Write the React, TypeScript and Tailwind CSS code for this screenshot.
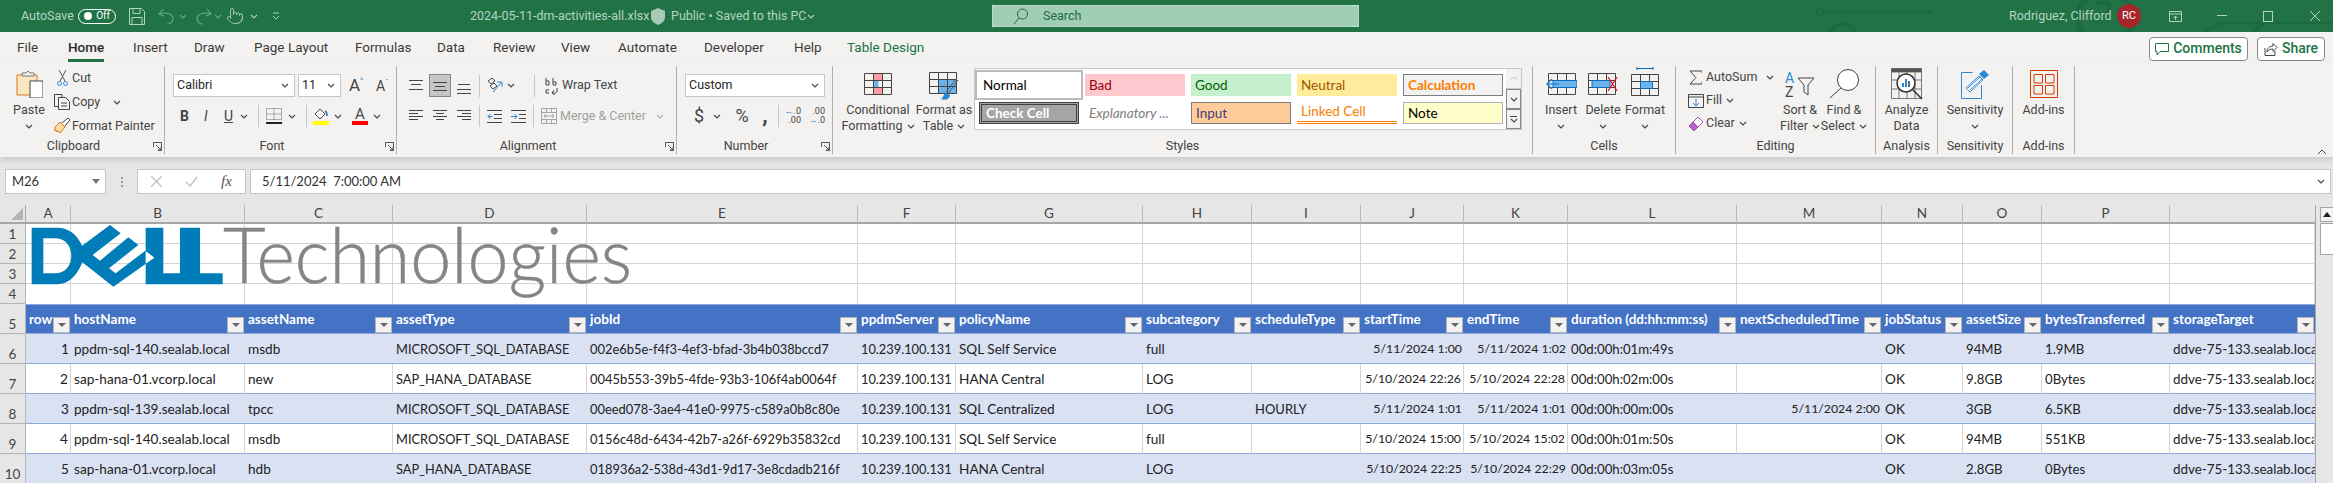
import React from "react";
import { Pointer } from "lucide-react";

type P = { children?: React.ReactNode; w: number; h: number; className?: string };
const S = ({ children, w, h, className }: P) => (
  <svg width={w} height={h} viewBox={`0 0 ${w} ${h}`} fill="none" className={`shrink-0 ${className ?? ""}`}>
    {children}
  </svg>
);
const Chev = ({ c = "#444" }: { c?: string }) => (
  <S w={8} h={5}>
    <path d="M1 1l3 3 3-3" stroke={c} strokeWidth="1.1" />
  </S>
);
const Launcher = () => (
  <S w={9} h={9}>
    <path d="M.5 5V.5H8.5V8.5H5M3 3l5 5M8 5v3H5" stroke="#555" strokeWidth="1" />
  </S>
);
const HLines = ({ y, x, w = 14 }: { y: number[]; x?: number[]; w?: number }) => (
  <S w={w} h={14}>
    {y.map((v, i) => (
      <path key={i} d={`M${x ? x[i] : 0} ${v + 0.5}H${x ? x[i + y.length] : w}`} stroke="#444" />
    ))}
  </S>
);

/* title bar art */
const Circuit = () => (
  <svg width="520" height="32" viewBox="0 0 520 32" fill="none" className="absolute right-0 top-0" stroke="#1d6a40" strokeWidth="3">
    <circle cx="7" cy="12" r="3.5" />
    <path d="M11 12H120" />
    <circle cx="30" cy="38" r="14" strokeWidth="4" />
    <circle cx="292" cy="18" r="27" strokeWidth="6" />
    <path d="M282 3h14v14" strokeWidth="4" />
    <path d="M392 32l14-9h114M440 32l10-8" />
  </svg>
);

const Dell = () => (
  <svg width="700" height="110" viewBox="0 0 2100 330" className="absolute left-0 top-0 pointer-events-none">
    <path
      fill="#007db8"
      fillRule="evenodd"
      d="M95 68H172C205 68 232 88 246 122L330 60 362 85 278 150 300 167 385 97 415 120 327 190 347 205 436 137 463 158 340 245 247 172C232 212 205 238 172 238H95ZM130 100V205H165C195 205 214 182 214 152 214 122 195 100 165 100ZM437 68H490V205H540V68H600V205H668V238H437Z"
    />
    <text x="669" y="234" fontSize="231" fontFamily="Lato, sans-serif" fontWeight="300" fill="#858585" stroke="#858585" strokeWidth="1.500" textLength="1227" lengthAdjust="spacingAndGlyphs">
      Technologies
    </text>
  </svg>
);

const TitleBar = () => (
  <div className="relative flex h-8 items-center overflow-hidden bg-[#217346] text-[12.500px] text-[#b4d3c2]">
    <Circuit />
    <span className="ml-[21px] w-[57px]">AutoSave</span>
    <div className="flex h-[15px] w-[38px] items-center justify-between rounded-full border border-white px-[5px] text-[10px] leading-none text-white">
      <span className="h-2 w-2 rounded-full bg-white" />
      <span>Off</span>
    </div>
    <S w={16} h={17} className="ml-[13px]">
      <path d="M.5.5h12l3 3v13H.5zM4 .5v5h7v-5M3 16.5v-7h10v7" stroke="#b4d3c2" />
    </S>
    <S w={18} h={17} className="ml-[13px]">
      <path d="M5 1L1 6l5 2M1 6c5-2 14-1 14 5 0 3-3 5-6 5" stroke="#6ba98a" strokeWidth="1.2" />
    </S>
    <div className="ml-[3px]"><Chev c="#6ba98a" /></div>
    <S w={18} h={17} className="ml-[7px]">
      <path d="M13 1l4 5-5 2M17 6C12 4 3 5 3 11c0 3 3 5 6 5" stroke="#6ba98a" strokeWidth="1.2" />
    </S>
    <div className="ml-[2px]"><Chev c="#6ba98a" /></div>
    <Pointer size={18} strokeWidth={1.1} color="#b4d3c2" className="ml-[4px] shrink-0" />
    <div className="ml-[6px]"><Chev c="#b4d3c2" /></div>
    <S w={8} h={8} className="ml-[14px]">
      <path d="M1 1h6M1 4l3 3 3-3" stroke="#b4d3c2" />
    </S>
    <span className="ml-[190px] w-[176px] whitespace-nowrap">2024-05-11-dm-activities-all.xlsx</span>
    <S w={14} h={17} className="ml-[5px]">
      <path d="M7 0l7 3v6c0 4-3 6-7 8-4-2-7-4-7-8V3z" fill="#a7c9b7" />
    </S>
    <span className="ml-[6px] w-[136px] whitespace-nowrap">Public • Saved to this PC</span>
    <Chev c="#b4d3c2" />
    <div className="ml-[177px] flex h-[22px] w-[367px] items-center border border-[#c0dccd] bg-[#a0cdb5] pl-[20px] text-[#1e6b41]">
      <S w={15} h={17}>
        <circle cx="9.5" cy="6" r="5" stroke="#1e6b41" />
        <path d="M6 10l-5 6" stroke="#1e6b41" />
      </S>
      <span className="ml-[15px]">Search</span>
    </div>
    <span className="relative ml-[650px] w-[108px] whitespace-nowrap">Rodriguez, Clifford</span>
    <div className="relative flex h-6 w-6 items-center justify-center rounded-full bg-[#a4262c] text-[11px] text-white">RC</div>
    <S w={13} h={11} className="relative ml-[28px]">
      <path d="M.5.5h12v10H.5zM.5 3h12M6.5 9V5M4.5 7l2-2 2 2" stroke="#b4d3c2" />
    </S>
    <S w={10} h={2} className="relative ml-[35px]"><path d="M0 .5h10" stroke="#b4d3c2" /></S>
    <S w={10} h={11} className="relative ml-[36px]"><rect x=".5" y=".5" width="9" height="10" stroke="#b4d3c2" /></S>
    <S w={10} h={10} className="relative ml-[37px]"><path d="M0 0l10 10M10 0L0 10" stroke="#b4d3c2" /></S>
  </div>
);

const tabs: [string, string][] = [
  ["File", "w-[51px]"],
  ["Home", "w-[65px]"],
  ["Insert", "w-[61px]"],
  ["Draw", "w-[60px]"],
  ["Page Layout", "w-[101px]"],
  ["Formulas", "w-[82px]"],
  ["Data", "w-[56px]"],
  ["Review", "w-[68px]"],
  ["View", "w-[57px]"],
  ["Automate", "w-[86px]"],
  ["Developer", "w-[90px]"],
  ["Help", "w-[53px]"],
];
const TabRow = () => (
  <div className="flex h-[30px] items-center bg-[#f3f2f1] pl-[17px] text-[13.500px] text-[#3b3a39]">
    {tabs.map(([t, w]) =>
      t === "Home" ? (
        <div key={t} className={w}>
          <span className="relative inline-block font-medium text-[#2b2b2b]">
            {t}
            <span className="absolute -bottom-[5px] left-0 h-[3px] w-full bg-[#217346]" />
          </span>
        </div>
      ) : (
        <span key={t} className={w}>{t}</span>
      )
    )}
    <span className="text-[#217346]">Table Design</span>
    <div className="ml-auto mr-2 flex gap-[9px] pt-[3px] text-[14px] font-medium text-[#217346]">
      <div className="flex h-6 w-[99px] items-center justify-center gap-1 rounded border border-[#8a8886] bg-white">
        <S w={14} h={14}><path d="M.5 1.5h13v8H5l-3 3.500v-3.500H.5z" stroke="#217346" /></S>
        Comments
      </div>
      <div className="flex h-6 w-[68px] items-center justify-center gap-1 rounded border border-[#8a8886] bg-white">
        <S w={14} h={14}><path d="M1 6v7.500h10V9M3 10c0-4 3-6 6-6V1.500l4 4-4 4V7c-3 0-5 1-6 3z" stroke="#444" /></S>
        Share
      </div>
    </div>
  </div>
);

const Group = ({ className, label, launcher, children }: { className: string; label: string; launcher?: boolean; children: React.ReactNode }) => (
  <div className={`flex h-[88px] shrink-0 flex-col border-r border-[#b3b0ad] ${className}`}>
    <div className="flex h-[76px]">{children}</div>
    <div className={`relative h-4 whitespace-nowrap text-center leading-4 text-[#444] ${launcher ? "pr-[17px]" : ""}`}>
      {label}
      {launcher && (
        <span className="absolute right-[2px] top-[4px] flex">
          <Launcher />
        </span>
      )}
    </div>
  </div>
);

const Big = ({ className, icon, lines, chev }: { className: string; icon: React.ReactNode; lines: string[]; chev?: boolean }) => (
  <div className={`flex shrink-0 flex-col items-center ${className}`}>
    <div className="flex h-9 items-center">{icon}</div>
    {lines.map((l, i) => (
      <div key={l} className="flex h-4 items-center gap-[4px] whitespace-nowrap leading-4">
        {l}
        {chev && i === 1 && <Chev />}
      </div>
    ))}
    {chev && lines.length === 1 && <div className="flex h-4 items-center"><Chev /></div>}
  </div>
);

const TableGrid = ({ children }: { children?: React.ReactNode }) => (
  <>
    {children}
    <path d="M.5 .5h27v21H.5zM9.500 .5v21M18.500 .5v21M.5 7.500h27M.5 14.500h27" stroke="#444" />
  </>
);

const CellStyle = ({ className, children }: { className: string; children: string }) => (
  <div className={`flex h-[22px] items-center whitespace-nowrap px-[4px] font-['Lato',sans-serif] text-[13.500px] ${className}`}>{children}</div>
);

const Ribbon = () => (
  <div className="relative z-10 flex h-[95px] bg-[#f3f2f1] pt-1 text-[12.500px] text-[#444] shadow-[0_3px_6px_rgba(0,0,0,0.13)]">
    <Group className="w-[165px]" label="Clipboard" launcher>
      <div className="flex w-[52px] flex-col items-center pl-[6px]">
        <S w={27} h={28} className="mt-1">
          <path d="M1 5h20v20H1z" fill="#fbe6c0" stroke="#d9771c" />
          <path d="M6 5V3h4l2-2 2 2h4v3H6z" fill="#f3f2f1" stroke="#777" />
          <rect x="14" y="11" width="13" height="17" fill="#fff" stroke="#444" />
        </S>
        <div className="mt-1 h-4 leading-4">Paste</div>
        <div className="flex h-4 items-center"><Chev /></div>
      </div>
      <div className="flex flex-col">
        <div className="flex h-6 items-center">
          <div className="flex w-5 justify-center">
            <S w={11} h={17}>
              <path d="M2 0l6 11M9 0L3 11" stroke="#555" />
              <circle cx="2.500" cy="13.500" r="2" stroke="#2b88d8" />
              <circle cx="8.500" cy="13.500" r="2" stroke="#2b88d8" />
            </S>
          </div>
          Cut
        </div>
        <div className="flex h-6 items-center">
          <div className="flex w-5 justify-center">
            <S w={16} h={16}>
              <path d="M4 12.500H.5V.5H8v3" stroke="#444" />
              <path d="M4.500 3.500h7l4 4v8h-11zM7 9h6M7 12h6" stroke="#444" fill="#f3f2f1" />
            </S>
          </div>
          Copy
          <div className="ml-[13px]"><Chev /></div>
        </div>
        <div className="flex h-6 items-center">
          <div className="flex w-5 justify-center">
            <S w={16} h={16}>
              <path d="M1 9l5-5 5 5-5 6-2-2-1 1-1-2-1 1z" fill="#fbd8a6" stroke="#d9771c" />
              <path d="M8 5l6-5 2 2-5 6" fill="#fff" stroke="#444" />
            </S>
          </div>
          Format Painter
        </div>
      </div>
    </Group>

    <Group className="w-[232px]" label="Font" launcher>
      <div className="flex flex-col pl-2 pt-2">
        <div className="flex h-[23px] items-center gap-[3px]">
          <div className="flex h-[23px] w-[122px] items-center justify-between border border-[#c8c6c4] bg-white pl-[3px] pr-[5px] text-[#1f1f1f]">Calibri<Chev /></div>
          <div className="flex h-[23px] w-[43px] items-center justify-between border border-[#c8c6c4] bg-white pl-[3px] pr-[5px] text-[#1f1f1f]">11<Chev /></div>
          <span className="ml-[5px] flex w-[24px] items-start text-[17px] leading-none">A<span className="text-[8px] text-[#2b88d8]">^</span></span>
          <span className="flex w-[20px] items-start text-[14px] leading-none">A<span className="text-[8px] text-[#2b88d8]">ˇ</span></span>
        </div>
        <div className="mt-[7px] flex h-6 items-center text-[14px]">
          <span className="ml-[7px] w-[24px] font-bold">B</span>
          <span className="w-[20px] italic">I</span>
          <span className="w-[16px] underline">U</span>
          <Chev />
          <div className="ml-[10px] h-[22px] w-px bg-[#c8c6c4]" />
          <S w={16} h={16} className="ml-[7px]">
            <path d="M.5.500h15v11H.5z" stroke="#666" strokeDasharray="1 1" />
            <path d="M8 .5v11M.5 6h15" stroke="#666" strokeDasharray="1 1" />
            <path d="M0 15h16" stroke="#222" strokeWidth="2" />
          </S>
          <div className="ml-[6px]"><Chev /></div>
          <div className="ml-[10px] h-[22px] w-px bg-[#c8c6c4]" />
          <S w={16} h={17} className="ml-[6px]">
            <path d="M7 1l5 5-5 5-5-5z" stroke="#444" fill="#fff" />
            <path d="M12 3c2 1 2 3 2 5" stroke="#2b6cb0" strokeWidth="1.500" />
            <rect y="13" width="16" height="4" fill="#ffff00" />
          </S>
          <div className="ml-[5px]"><Chev /></div>
          <div className="ml-[10px] flex h-[18px] w-4 flex-col items-center">
            <span className="h-[14px] text-[15px] leading-[14px]">A</span>
            <span className="h-1 w-4 bg-[#ff0000]" />
          </div>
          <div className="ml-[5px]"><Chev /></div>
        </div>
      </div>
    </Group>

    <Group className="w-[280px]" label="Alignment" launcher>
      <div className="flex flex-col pl-3 pt-2">
        <div className="flex h-[23px] items-center">
          <HLines y={[1, 5, 10]} x={[0, 2, 0, 14, 12, 14]} />
          <div className="ml-[6px] flex h-[23px] w-[22px] items-center justify-center border border-[#8a8886] bg-[#c8c6c4]">
            <HLines y={[3, 7, 11]} x={[0, 2, 0, 14, 12, 14]} />
          </div>
          <div className="ml-[6px] mt-[4px]"><HLines y={[3, 8, 12]} x={[1, 0, 0, 13, 14, 14]} /></div>
          <div className="ml-[8px] h-[22px] w-px bg-[#c8c6c4]" />
          <S w={16} h={17} className="ml-[7px]">
            <path d="M1 4l4-3 3 3-4 3zM3 9l4-3 3 3-4 3z" stroke="#444" />
            <path d="M6 15l8-9M10 5h5v5" stroke="#2b88d8" />
          </S>
          <div className="ml-[4px]"><Chev /></div>
          <div className="ml-[19px] h-[22px] w-px bg-[#c8c6c4]" />
          <S w={15} h={18} className="ml-[9px]">
            <path d="M2 8V1M2 4h3v4H2M9 1v7M9 5h3v3H9M5 16H2v-3h3M13 11v3c0 2-2 2-5 2M10 13l-2 3 3 2" stroke="#444" />
          </S>
          <span className="ml-[3px] whitespace-nowrap">Wrap Text</span>
        </div>
        <div className="mt-[7px] flex h-6 items-center">
          <HLines y={[1, 4, 7, 10]} x={[0, 0, 0, 0, 14, 9, 14, 9]} />
          <div className="ml-[10px]"><HLines y={[1, 4, 7, 10]} x={[0, 3, 0, 3, 14, 11, 14, 11]} /></div>
          <div className="ml-[10px]"><HLines y={[1, 4, 7, 10]} x={[0, 5, 0, 5, 14, 14, 14, 14]} /></div>
          <div className="ml-[8px] h-[22px] w-px bg-[#c8c6c4]" />
          <S w={15} h={13} className="ml-[7px]">
            <path d="M0 .5h15M7 4.500h8M7 8.500h8M0 12.500h15" stroke="#444" />
            <path d="M6 6.500H1M3.500 4l-2.500 2.500 2.500 2.500" stroke="#2b88d8" />
          </S>
          <S w={15} h={13} className="ml-[9px]">
            <path d="M0 .5h15M8 4.500h7M8 8.500h7M0 12.500h15" stroke="#444" />
            <path d="M0 6.500h6M3.500 4l2.500 2.500-2.500 2.500" stroke="#2b88d8" />
          </S>
          <div className="ml-[7px] h-[22px] w-px bg-[#c8c6c4]" />
          <S w={16} h={16} className="ml-[7px]">
            <path d="M.5.500h15v15H.5zM.5 4.500h15M.5 11.500h15M5.500.5v4M10.500.5v4M5.500 11.500v4M10.500 11.500v4M3 8h10M5 6L3 8l2 2M11 6l2 2-2 2" stroke="#a8a6a4" />
          </S>
          <span className="ml-[3px] whitespace-nowrap text-[#a19f9d]">Merge &amp; Center</span>
          <div className="ml-[10px]"><Chev c="#b3b0ad" /></div>
        </div>
      </div>
    </Group>

    <Group className="w-[156px]" label="Number" launcher>
      <div className="flex flex-col pl-2 pt-2">
        <div className="flex h-[23px] w-[140px] items-center justify-between border border-[#c8c6c4] bg-white pl-[3px] pr-[5px] text-[#1f1f1f]">Custom<Chev /></div>
        <div className="mt-[7px] flex h-6 items-center">
          <span className="ml-[5px] w-[18px] text-center text-[18px] leading-none">$</span>
          <div className="ml-[5px]"><Chev /></div>
          <span className="ml-[9px] w-[24px] text-center text-[18px] leading-none">%</span>
          <span className="ml-[6px] w-[10px] text-center text-[22px] font-bold leading-[14px]">,</span>
          <div className="ml-[8px] h-[22px] w-px bg-[#c8c6c4]" />
          <div className="ml-[7px] flex w-[15px] flex-col text-[9px] leading-[9px]">
            <span className="flex justify-end"><span className="text-[#2b88d8]">←</span>.0</span>
            <span className="text-right">.00</span>
          </div>
          <div className="ml-[9px] flex w-[15px] flex-col text-[9px] leading-[9px]">
            <span className="text-right">.00</span>
            <span className="flex justify-end"><span className="text-[#2b88d8]">→</span>.0</span>
          </div>
        </div>
      </div>
    </Group>

    <Group className="w-[700px]" label="Styles">
      <Big
        className="ml-[4px] w-[82px]"
        lines={["Conditional", "Formatting"]}
        chev
        icon={
          <S w={28} h={22}>
            <TableGrid>
              <rect x="9.500" y=".5" width="9" height="7" fill="#ff9aa2" stroke="#e81123" />
              <rect x="9.500" y="7.500" width="5" height="7" fill="#6cb2eb" />
              <rect x="9.500" y="14.500" width="9" height="7" fill="#ff9aa2" stroke="#e81123" />
            </TableGrid>
          </S>
        }
      />
      <Big
        className="w-[50px]"
        lines={["Format as", "Table"]}
        chev
        icon={
          <S w={30} h={30} className="mt-[6px]">
            <TableGrid>
              <rect x="9.500" y="7.500" width="18" height="14" fill="#6cb2eb" />
            </TableGrid>
            <path d="M28 6L17 20M29 8L19 22" stroke="#555" />
            <path d="M17 21c-3 1-2 4-5 6 4 2 9 0 9-4z" fill="#2b88d8" />
          </S>
        }
      />
      <div className="ml-[5px] mt-[2px] flex h-[62px] w-[548px] border border-[#c8c6c4] bg-white">
        <div className="ml-[4px] mt-[5px] grid h-[50px] w-[524px] grid-cols-[100px_100px_100px_100px_100px] gap-x-[6px] gap-y-[6px]">
          <CellStyle className="bg-white text-black shadow-[0_0_0_2px_#fff,0_0_0_4px_#bdbbb9]">Normal</CellStyle>
          <CellStyle className="bg-[#ffc7ce] text-[#9c0006]">Bad</CellStyle>
          <CellStyle className="bg-[#c6efce] text-[#006100]">Good</CellStyle>
          <CellStyle className="bg-[#ffeb9c] text-[#9c5700]">Neutral</CellStyle>
          <CellStyle className="border border-[#7f7f7f] bg-[#f2f2f2] font-bold text-[#fa7d00]">Calculation</CellStyle>
          <CellStyle className="border-[3px] border-double border-[#3f3f3f] bg-[#a5a5a5] font-bold text-white">Check Cell</CellStyle>
          <CellStyle className="italic text-[#7f7f7f]">Explanatory ...</CellStyle>
          <CellStyle className="border border-[#7f7f7f] bg-[#ffcc99] text-[#3f3f76]">Input</CellStyle>
          <CellStyle className="border-b-[3px] border-double border-[#ff8001] text-[#fa7d00]">Linked Cell</CellStyle>
          <CellStyle className="border border-[#b2b2b2] bg-[#ffffcc] text-black">Note</CellStyle>
        </div>
        <div className="ml-[3px] flex w-[15px] flex-col">
          <div className="flex h-5 items-center justify-center border-b border-[#c8c6c4] bg-[#f3f2f1]"><S w={8} h={5}><path d="M1 4l3-3 3 3" stroke="#c8c6c4" /></S></div>
          <div className="flex h-5 items-center justify-center border border-[#8a8886] bg-[#f3f2f1]"><Chev /></div>
          <div className="flex h-5 flex-col items-center justify-center gap-[1px] border border-[#8a8886] bg-[#f3f2f1]">
            <span className="h-px w-[7px] bg-[#444]" />
            <Chev />
          </div>
        </div>
      </div>
    </Group>

    <Group className="w-[143px]" label="Cells">
      <Big
        className="ml-[7px] w-[42px]"
        lines={["Insert"]}
        chev
        icon={
          <S w={32} h={22}>
            <g transform="translate(3)"><TableGrid /></g>
            <rect x="8" y="7.500" width="24" height="7" fill="#6cb2eb" stroke="#0f6cbd" />
            <path d="M14 11H2M7 6l-5 5 5 5" stroke="#2b88d8" strokeWidth="1.500" />
          </S>
        }
      />
      <Big
        className="w-[42px]"
        lines={["Delete"]}
        chev
        icon={
          <S w={30} h={22}>
            <TableGrid />
            <rect x="4" y="7.500" width="18" height="7" fill="#6cb2eb" stroke="#0f6cbd" />
            <path d="M20 4l9 14M29 4l-9 14" stroke="#e81123" strokeWidth="1.300" />
          </S>
        }
      />
      <Big
        className="w-[42px]"
        lines={["Format"]}
        chev
        icon={
          <S w={28} h={30} className="mb-[4px]">
            <path d="M6 1.500h16M6 0v3M22 0v3" stroke="#0f6cbd" />
            <g transform="translate(0 7)"><TableGrid /></g>
            <rect x="9.500" y="14.500" width="12" height="7" fill="#6cb2eb" stroke="#0f6cbd" />
          </S>
        }
      />
    </Group>

    <Group className="w-[200px]" label="Editing">
      <div className="flex w-[100px] shrink-0 flex-col pl-[9px]">
        <div className="flex h-[23px] items-center">
          <div className="flex w-[21px] justify-center">
            <S w={13} h={15}><path d="M13 3V1H1l6 6.500L1 14h12v-2" stroke="#444" /></S>
          </div>
          AutoSum
          <div className="ml-[9px]"><Chev /></div>
        </div>
        <div className="flex h-[23px] items-center">
          <div className="flex w-[21px] justify-center">
            <S w={16} h={14}>
              <path d="M.5.5h15v13H.5zM.5 3h15" stroke="#444" />
              <path d="M8 5v7M5 9l3 3 3-3" stroke="#2b88d8" />
            </S>
          </div>
          Fill
          <div className="ml-[4px]"><Chev /></div>
        </div>
        <div className="flex h-[23px] items-center">
          <div className="flex w-[21px] justify-center">
            <S w={16} h={16}>
              <path d="M1 10l9-9 5 5-9 9z" fill="#fff" stroke="#a24bb0" />
              <path d="M1 10l4-4 5 5-4 4z" fill="#b864c4" stroke="#a24bb0" />
            </S>
          </div>
          Clear
          <div className="ml-[4px]"><Chev /></div>
        </div>
      </div>
      <Big
        className="w-[48px]"
        lines={["Sort &", "Filter"]}
        chev
        icon={
          <S w={30} h={28}>
            <text x="0" y="13" fontSize="14" fill="#2b88d8" fontFamily="Roboto, sans-serif">A</text>
            <text x="0" y="27" fontSize="14" fill="#444" fontFamily="Roboto, sans-serif">Z</text>
            <path d="M13 8h16l-6 7v10l-4-3v-7z" stroke="#444" />
          </S>
        }
      />
      <Big
        className="w-[40px]"
        lines={["Find &", "Select"]}
        chev
        icon={
          <S w={30} h={30}>
            <circle cx="19" cy="11" r="10.500" stroke="#444" fill="#fff" />
            <path d="M12 19L1 29" stroke="#444" />
          </S>
        }
      />
    </Group>

    <Group className="w-[62px]" label="Analysis">
      <Big
        className="w-full"
        lines={["Analyze", "Data"]}
        icon={
          <S w={32} h={32}>
            <path d="M.5.5h30v30H.5zM.5 4h30M.5 12h30M.5 21h30M8 4v27M16 4v27M24 4v27" stroke="#777" />
            <rect x=".5" y=".5" width="30" height="3.500" fill="#555" />
            <circle cx="15" cy="15" r="9" fill="#fff" stroke="#333" strokeWidth="1.500" />
            <path d="M11 19v-4h2v4zM14 19v-8h2v8z" fill="#2b88d8" />
            <path d="M17 19v-6h2v6z" fill="#666" />
            <path d="M22 22l9 9" stroke="#333" strokeWidth="1.500" />
          </S>
        }
      />
    </Group>

    <Group className="w-[75px]" label="Sensitivity">
      <Big
        className="w-full"
        lines={["Sensitivity"]}
        chev
        icon={
          <S w={28} h={30}>
            <path d="M.5 3.500h11M.5 3.500v26h20V16" stroke="#2b88d8" />
            <path d="M5 19L18 7l4 4L9 23z" fill="#fff" stroke="#2b88d8" />
            <path d="M7 19l12-11M9 21l12-11" stroke="#2b88d8" />
            <path d="M18 5l5-4 5 5-5 4z" fill="#2b88d8" />
          </S>
        }
      />
    </Group>

    <Group className="w-[62px]" label="Add-ins">
      <Big
        className="w-full"
        lines={["Add-ins"]}
        icon={
          <S w={28} h={28}>
            <path d="M.5.5h27v27H.5z" stroke="#d83b01" />
            <path d="M4 4.500h8.500v8.500H4zM15.500 4.500H24v8.500h-8.500zM4 15.500h8.500V24H4zM15.500 15.500H24V24h-8.500z" stroke="#d83b01" />
          </S>
        }
      />
    </Group>

    <div className="flex flex-1 items-end justify-end pb-[2px] pr-[6px]">
      <S w={10} h={6}><path d="M1 5l4-4 4 4" stroke="#444" /></S>
    </div>
  </div>
);

const FormulaBar = () => (
  <div className="mt-3 flex h-[25px] pl-[5px] font-['Lato',sans-serif] text-[13px] text-[#333]">
    <div className="flex w-[101px] items-center justify-between border border-[#c8c6c4] bg-white pl-[6px] pr-[5px]">
      M26
      <span className="h-0 w-0 border-x-[4px] border-t-[5px] border-x-transparent border-t-[#777]" />
    </div>
    <div className="flex w-[31px] flex-col items-center justify-center gap-[2px]">
      <span className="h-[2px] w-[2px] bg-[#999]" />
      <span className="h-[2px] w-[2px] bg-[#999]" />
      <span className="h-[2px] w-[2px] bg-[#999]" />
    </div>
    <div className="flex w-[109px] items-center border border-[#c8c6c4] bg-white pl-[13px]">
      <S w={11} h={11}><path d="M0 0l11 11M11 0L0 11" stroke="#c3c1bf" strokeWidth="1.300" /></S>
      <S w={13} h={11} className="ml-[23px]"><path d="M1 6l4 4 7-9" stroke="#c3c1bf" strokeWidth="1.300" /></S>
      <span className="ml-[23px] font-['Liberation_Serif',serif] text-[15px] italic text-[#555]">fx</span>
    </div>
    <div className="ml-[4px] mr-[2px] flex flex-1 items-center justify-between border border-[#c8c6c4] bg-white pl-[11px] pr-[5px]">
      <span className="whitespace-pre">5/11/2024  7:00:00 AM</span>
      <Chev />
    </div>
  </div>
);

const letters = ["A", "B", "C", "D", "E", "F", "G", "H", "I", "J", "K", "L", "M", "N", "O", "P"];
const headers = ["row", "hostName", "assetName", "assetType", "jobId", "ppdmServer", "policyName", "subcategory", "scheduleType", "startTime", "endTime", "duration (dd:hh:mm:ss)", "nextScheduledTime", "jobStatus", "assetSize", "bytesTransferred", "storageTarget"];
const rightCols = new Set([0, 9, 10, 12]);
const colSize = [
  "text-[13.600px]", "text-[13.600px]", "text-[13.600px]", "text-[12.800px]", "text-[12.900px]", "text-[12.800px]",
  "text-[13.600px]", "text-[13.600px]", "text-[13px]", "text-[12.300px]", "text-[12.300px]", "text-[13.200px]",
  "text-[12.300px]", "text-[13.600px]", "text-[13.200px]", "text-[13.200px]", "text-[13.400px]",
];
const rows: string[][] = [
  ["1", "ppdm-sql-140.sealab.local", "msdb", "MICROSOFT_SQL_DATABASE", "002e6b5e-f4f3-4ef3-bfad-3b4b038bccd7", "10.239.100.131", "SQL Self Service", "full", "", "5/11/2024 1:00", "5/11/2024 1:02", "00d:00h:01m:49s", "", "OK", "94MB", "1.9MB", "ddve-75-133.sealab.local"],
  ["2", "sap-hana-01.vcorp.local", "new", "SAP_HANA_DATABASE", "0045b553-39b5-4fde-93b3-106f4ab0064f", "10.239.100.131", "HANA Central", "LOG", "", "5/10/2024 22:26", "5/10/2024 22:28", "00d:00h:02m:00s", "", "OK", "9.8GB", "0Bytes", "ddve-75-133.sealab.local"],
  ["3", "ppdm-sql-139.sealab.local", "tpcc", "MICROSOFT_SQL_DATABASE", "00eed078-3ae4-41e0-9975-c589a0b8c80e", "10.239.100.131", "SQL Centralized", "LOG", "HOURLY", "5/11/2024 1:01", "5/11/2024 1:01", "00d:00h:00m:00s", "5/11/2024 2:00", "OK", "3GB", "6.5KB", "ddve-75-133.sealab.local"],
  ["4", "ppdm-sql-140.sealab.local", "msdb", "MICROSOFT_SQL_DATABASE", "0156c48d-6434-42b7-a26f-6929b35832cd", "10.239.100.131", "SQL Self Service", "full", "", "5/10/2024 15:00", "5/10/2024 15:02", "00d:00h:01m:50s", "", "OK", "94MB", "551KB", "ddve-75-133.sealab.local"],
  ["5", "sap-hana-01.vcorp.local", "hdb", "SAP_HANA_DATABASE", "018936a2-538d-43d1-9d17-3e8cdadb216f", "10.239.100.131", "HANA Central", "LOG", "", "5/10/2024 22:25", "5/10/2024 22:29", "00d:00h:03m:05s", "", "OK", "2.8GB", "0Bytes", "ddve-75-133.sealab.local"],
];

const RowHead = ({ n }: { n: number }) => (
  <div className="flex items-end justify-center border-b border-r border-[#b5b5b5] bg-[#e6e6e6] pb-[1px] leading-4 text-[#444]">{n}</div>
);

const Sheet = () => (
  <div className="mt-[11px] flex h-[278px] font-['Lato',sans-serif] text-[13.500px] text-[#222]">
    <div className="relative h-[278px] w-[2315px] shrink-0 overflow-hidden">
      <div className="grid w-[2315px] grid-cols-[26px_45px_174px_148px_194px_271px_98px_187px_109px_109px_103px_104px_169px_145px_81px_79px_128px_145px] grid-rows-[19px_20px_20px_20px_20px_30px_30px_30px_30px_30px_30px]">
        <div className="flex items-end justify-end border-b-2 border-r border-[#a6a6a6] bg-[#e6e6e6] p-[2px]">
          <span className="h-0 w-0 border-b-[12px] border-l-[12px] border-b-[#b4b4b4] border-l-transparent" />
        </div>
        {letters.map((l) => (
          <div key={l} className="flex items-center justify-center border-b-2 border-r border-b-[#a6a6a6] border-r-[#b9b9b9] bg-[#e6e6e6] text-[#444]">{l}</div>
        ))}
        <div className="border-b-2 border-[#a6a6a6] bg-[#e6e6e6]" />
        {[1, 2, 3, 4].map((r) => (
          <React.Fragment key={r}>
            <RowHead n={r} />
            {headers.map((h) => (
              <div key={h} className={`border-r border-[#d4d4d4] bg-white ${r < 4 ? "border-b" : ""}`} />
            ))}
          </React.Fragment>
        ))}
        <RowHead n={5} />
        {headers.map((h) => (
          <div key={h} className="relative flex items-center overflow-hidden whitespace-nowrap border-y border-y-[#8ea9db] bg-[#4472c4] pl-[3px] pt-[1px] font-bold text-white">
            {h}
            <span className="absolute bottom-0 right-[1px] flex h-4 w-[17px] items-center justify-center border border-[#b5b5b5] bg-[#f3f3f3]">
              <span className="h-0 w-0 border-x-[4px] border-t-[4px] border-x-transparent border-t-[#666]" />
            </span>
          </div>
        ))}
        {rows.map((row, i) => (
          <React.Fragment key={i}>
            <RowHead n={i + 6} />
            {row.map((c, j) => (
              <div
                key={j}
                className={`flex items-center overflow-hidden whitespace-nowrap border-b border-b-[#8ea9db] pt-[2px] ${colSize[j]} ${
                  i % 2 === 0 ? "bg-[#d9e1f2]" : "border-r border-r-[#d4d4d4] bg-white"
                } ${rightCols.has(j) ? "justify-end pr-[2px]" : "pl-[3px]"}`}
              >
                {c}
              </div>
            ))}
          </React.Fragment>
        ))}
      </div>
      <Dell />
    </div>
    <div className="flex h-[278px] flex-1 flex-col border-l border-[#a6a6a6] bg-[#e6e6e6] pl-[4px] pt-[2px]">
      <div className="flex h-[15px] w-[14px] items-center justify-center border border-[#a6a6a6] bg-[#f3f3f3]">
        <span className="h-0 w-0 border-x-[4px] border-b-[5px] border-x-transparent border-b-[#222]" />
      </div>
      <div className="mt-[1px] h-[32px] w-[14px] border border-[#a6a6a6] bg-white" />
    </div>
  </div>
);

export default function App() {
  return (
    <div className="h-[483px] w-[2333px] overflow-hidden bg-[#e6e6e6] font-['Roboto',sans-serif]">
      <TitleBar />
      <TabRow />
      <Ribbon />
      <FormulaBar />
      <Sheet />
    </div>
  );
}
